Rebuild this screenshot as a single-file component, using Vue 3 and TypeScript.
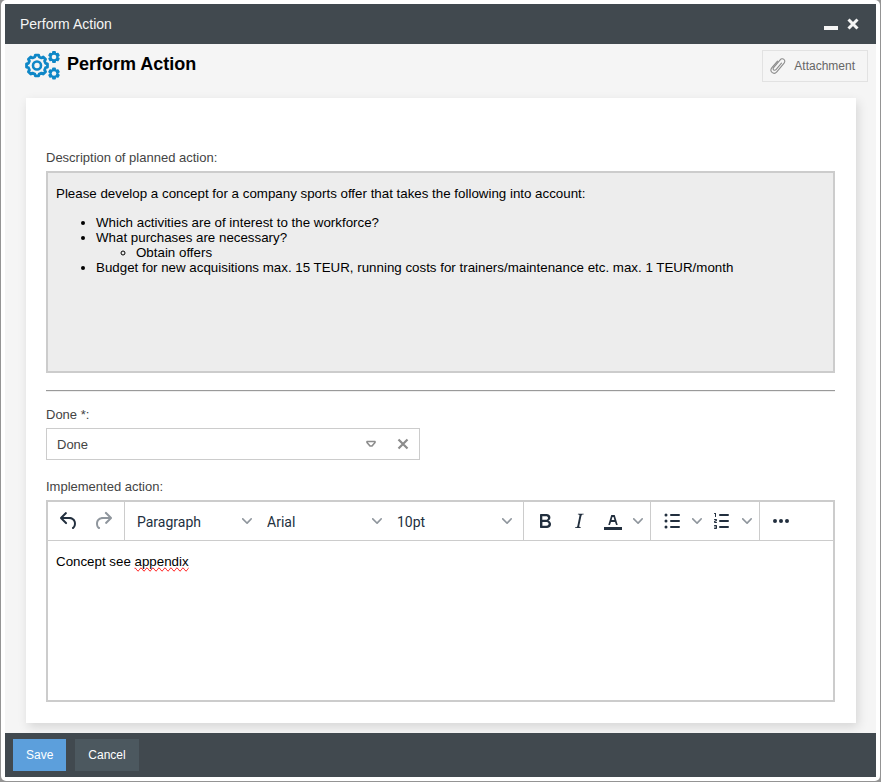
<script setup lang="ts">
import { ref } from 'vue'

interface Tool {
  name: string
  label: string
  split?: boolean
  disabled?: boolean
}

const status = ref('Done')
const blockFormat = ref('Paragraph')
const fontFamily = ref('Arial')
const fontSize = ref('10pt')

const historyTools: Tool[] = [
  { name: 'undo', label: 'Undo' },
  { name: 'redo', label: 'Redo', disabled: true },
]
const toolGroups: Tool[][] = [
  [
    { name: 'bold', label: 'Bold' },
    { name: 'italic', label: 'Italic' },
    { name: 'color', label: 'Text color', split: true },
  ],
  [
    { name: 'bullets', label: 'Bullet list', split: true },
    { name: 'numbers', label: 'Numbered list', split: true },
  ],
  [{ name: 'more', label: 'More' }],
]

const iconPaths: Record<string, string> = {
  undo: 'M6.4 8H12c3.7 0 6.2 2 6.8 5.1.6 2.7-.4 5.6-2.3 6.8a1 1 0 0 1-1-1.8c1.1-.6 1.8-2.7 1.4-4.6-.5-2.1-2.1-3.5-4.9-3.5H6.4l3.3 3.3a1 1 0 1 1-1.4 1.4l-5-5a1 1 0 0 1 0-1.4l5-5a1 1 0 0 1 1.4 1.4L6.4 8z',
  redo: 'M17.6 10H12c-2.8 0-4.4 1.4-4.9 3.5-.4 2 .3 4 1.4 4.6a1 1 0 1 1-1 1.8c-2-1.2-2.9-4.1-2.3-6.8.6-3 3-5.1 6.8-5.1h5.6l-3.3-3.3a1 1 0 1 1 1.4-1.4l5 5a1 1 0 0 1 0 1.4l-5 5a1 1 0 0 1-1.4-1.4l3.3-3.3z',
  bold: 'M7.8 19c-.3 0-.5 0-.6-.2l-.2-.5V5.7c0-.2 0-.4.2-.5l.6-.2h5c1.5 0 2.7.3 3.5 1 .7.6 1.1 1.4 1.1 2.5a3 3 0 0 1-.6 1.9c-.4.6-1 1-1.6 1.2.4.1.9.3 1.3.6s.8.7 1 1.2c.4.4.5 1 .5 1.6 0 1.3-.4 2.3-1.3 3-.8.7-2.1 1-3.8 1H7.8zm5-8.3c.6 0 1.2-.1 1.6-.5.4-.3.6-.7.6-1.3 0-1.1-.8-1.7-2.3-1.7H9.3v3.5h3.4zm.5 6c.7 0 1.3-.1 1.7-.4.4-.4.6-.9.6-1.5s-.2-1-.7-1.4c-.4-.3-1-.4-2-.4H9.4v3.8h4z',
  italic: 'M16.7 4.7l-.1.9h-.3c-.6 0-1 0-1.4.3-.3.3-.4.6-.5 1.1l-2.1 9.8v.6c0 .5.4.8 1.4.8h.2l-.2.8H8l.2-.8h.2c1.1 0 1.8-.5 2-1.5l2-9.8.1-.5c0-.6-.4-.8-1.4-.8h-.3l.2-.9h5.8z',
  color: 'M3 18h18v3H3zM8.7 16h-.8a.5.5 0 0 1-.5-.6l2.7-9c.1-.3.3-.4.5-.4h2.8c.2 0 .4.1.5.4l2.7 9a.5.5 0 0 1-.5.6h-.8a.5.5 0 0 1-.4-.4l-.7-2.2c0-.3-.3-.4-.5-.4h-3.4c-.2 0-.4.1-.5.4l-.7 2.2c0 .3-.2.4-.4.4zm2.6-7.6l-.6 2a.5.5 0 0 0 .5.6h1.6a.5.5 0 0 0 .5-.6l-.6-2c0-.3-.3-.4-.5-.4h-.4c-.2 0-.4.1-.5.4z',
  bullets: 'M11 5h8a1 1 0 0 1 0 2h-8a1 1 0 0 1 0-2zm0 6h8a1 1 0 0 1 0 2h-8a1 1 0 0 1 0-2zm0 6h8a1 1 0 0 1 0 2h-8a1 1 0 0 1 0-2zM6 4.5a1.5 1.5 0 1 1 0 3 1.5 1.5 0 0 1 0-3zm0 6a1.5 1.5 0 1 1 0 3 1.5 1.5 0 0 1 0-3zm0 6a1.5 1.5 0 1 1 0 3 1.5 1.5 0 0 1 0-3z',
  numbers: 'M10 17h8a1 1 0 0 1 0 2h-8a1 1 0 0 1 0-2zm0-6h8a1 1 0 0 1 0 2h-8a1 1 0 0 1 0-2zm0-6h8a1 1 0 0 1 0 2h-8a1 1 0 1 1 0-2zM6 4v3.5a.5.5 0 0 1-1 0V5h-.5a.5.5 0 0 1 0-1H6zm-1 8.8l.2.2h1.3a.5.5 0 0 1 0 1H4.6a1 1 0 0 1-.6-1v-.3c0-.4.2-.8.6-1l1.4-.6V11H4.5a.5.5 0 0 1 0-1h1.9c.3.1.6.5.6.9v.3c0 .4-.2.8-.6 1l-1.4.6zM7 17v2c0 .6-.4 1-1 1H4.5a.5.5 0 0 1 0-1h1.2a.3.3 0 0 0 0-.6H4.4a.4.4 0 1 1 0-.8h1.3a.3.3 0 0 0 0-.6H4.5a.5.5 0 1 1 0-1H6c.6 0 1 .4 1 1z',
  more: 'M6 10a2 2 0 1 0 0 4 2 2 0 0 0 0-4zm12 0a2 2 0 1 0 0 4 2 2 0 0 0 0-4zm-6 0a2 2 0 1 0 0 4 2 2 0 0 0 0-4z',
}
const chevron = 'M8.7 2.2c.3-.3.8-.3 1 0 .4.4.4.9 0 1.2L5.7 7.8c-.3.3-.9.3-1.2 0L.2 3.4a.8.8 0 0 1 0-1.2c.3-.3.8-.3 1.1 0L5 6l3.7-3.8z'

// Outline of a cog: each tooth is a trapezoid between the root and tip radius.
function cog(cx: number, cy: number, tip: number, root: number, teeth: number, turn = 0): string {
  const step = (Math.PI * 2) / teeth
  const points: string[] = []
  for (let i = 0; i < teeth; i++) {
    const a = (i + turn) * step
    for (const [offset, r] of [[-0.32, root], [-0.2, tip], [0.2, tip], [0.32, root]]) {
      const t = a + offset * step
      points.push(`${(cx + r * Math.cos(t)).toFixed(2)} ${(cy + r * Math.sin(t)).toFixed(2)}`)
    }
  }
  return `M${points.join('L')}Z`
}
const bigCog = cog(12, 14.5, 10.6, 8.8, 8)
const topCog = cog(29, 6, 5.2, 3.9, 6, 0.5)
const lowCog = cog(29, 22.5, 5.2, 3.9, 6, 0.5)
</script>

<template>
  <div class="window">
    <header class="titlebar">
      <span class="title">Perform Action</span>
      <button type="button" class="win-btn" aria-label="Minimize">
        <svg width="14" height="14" viewBox="0 0 14 14"><path d="M0 9h14v4H0z" fill="currentColor" /></svg>
      </button>
      <button type="button" class="win-btn" aria-label="Close">
        <svg width="12" height="12" viewBox="0 0 12 12"><path d="M1.5 1.5l9 9M10.5 1.5l-9 9" stroke="currentColor" stroke-width="3" /></svg>
      </button>
    </header>

    <main class="body">
      <div class="head">
        <svg class="cogs" width="36" height="30" viewBox="0 0 36 30" fill="none" stroke="#0f87c7" stroke-linejoin="round">
          <path :d="bigCog" stroke-width="2.8" />
          <circle cx="12" cy="14.5" r="4" stroke-width="2.6" />
          <path :d="topCog" fill="#0f87c7" stroke-width="1.6" />
          <path :d="lowCog" fill="#0f87c7" stroke-width="1.6" />
          <circle cx="29" cy="6" r="2.3" fill="#f5f5f5" stroke="none" />
          <circle cx="29" cy="22.5" r="2.3" fill="#f5f5f5" stroke="none" />
        </svg>
        <h1>Perform Action</h1>
        <button type="button" class="attach">
          <svg width="16" height="18" viewBox="0 0 16 18" fill="none" stroke="#8c8c8c" stroke-width="1.1" stroke-linecap="round">
            <path d="M11.5 6.2L6 12.6c-.8.9-1.9.8-2.4.3-.6-.5-.7-1.5 0-2.3l6.6-7.8c1-1.2 2.7-1.3 3.7-.4 1.1.9 1.2 2.5.2 3.7l-7.3 8.7c-1.4 1.6-3.5 1.7-4.8.6-1.3-1.2-1.4-3.1-.1-4.7l5.6-6.5" />
          </svg>
          Attachment
        </button>
      </div>

      <section class="card">
        <div id="description-label" class="label">Description of planned action:</div>
        <div class="description" role="document" aria-labelledby="description-label">
          <p>Please develop a concept for a company sports offer that takes the following into account:</p>
          <ul>
            <li>Which activities are of interest to the workforce?</li>
            <li>What purchases are necessary?
              <ul>
                <li>Obtain offers</li>
              </ul>
            </li>
            <li>Budget for new acquisitions max. 15 TEUR, running costs for trainers/maintenance etc. max. 1 TEUR/month</li>
          </ul>
        </div>

        <hr />

        <label class="label" for="status">Done *:</label>
        <div class="combo">
          <select id="status" v-model="status">
            <option value=""></option>
            <option>Done</option>
          </select>
          <svg class="combo-arrow" width="10" height="8" viewBox="0 0 10 8" fill="none" stroke="#8c8c8c" stroke-width="1.6" stroke-linejoin="round">
            <path d="M1 1.5h8v1L6 6H4L1 2.500z" />
          </svg>
          <button type="button" class="clear" aria-label="Clear" @click="status = ''">
            <svg width="12" height="12" viewBox="0 0 12 12"><path d="M1.5 1.5l9 9M10.5 1.5l-9 9" stroke="#8c8c8c" stroke-width="2.2" /></svg>
          </button>
        </div>

        <div id="implemented-label" class="label">Implemented action:</div>
        <div class="editor">
          <div class="toolbar" role="toolbar" aria-label="Formatting">
            <div class="group">
              <button v-for="t in historyTools" :key="t.name" type="button" class="tool" :aria-label="t.label" :disabled="t.disabled">
                <svg width="24" height="24" viewBox="0 0 24 24"><path :d="iconPaths[t.name]" /></svg>
              </button>
            </div>
            <div class="group">
              <div class="picker">
                <select v-model="blockFormat" aria-label="Block format"><option>Paragraph</option></select>
                <svg class="chevron" width="10" height="10" viewBox="0 0 10 10"><path :d="chevron" /></svg>
              </div>
              <div class="picker">
                <select v-model="fontFamily" aria-label="Font"><option>Arial</option></select>
                <svg class="chevron" width="10" height="10" viewBox="0 0 10 10"><path :d="chevron" /></svg>
              </div>
              <div class="picker">
                <select v-model="fontSize" aria-label="Font size"><option>10pt</option></select>
                <svg class="chevron" width="10" height="10" viewBox="0 0 10 10"><path :d="chevron" /></svg>
              </div>
            </div>
            <div v-for="(group, i) in toolGroups" :key="i" class="group">
              <template v-for="t in group" :key="t.name">
                <button type="button" class="tool" :aria-label="t.label">
                  <svg width="24" height="24" viewBox="0 0 24 24"><path :d="iconPaths[t.name]" fill-rule="evenodd" /></svg>
                </button>
                <button v-if="t.split" type="button" class="tool split" :aria-label="t.label + ' options'">
                  <svg class="chevron" width="10" height="10" viewBox="0 0 10 10"><path :d="chevron" /></svg>
                </button>
              </template>
            </div>
          </div>
          <div class="content" contenteditable="true" spellcheck="false" role="textbox" aria-multiline="true" aria-labelledby="implemented-label">
            <p>Concept see <span class="misspelled">appendix</span></p>
          </div>
        </div>
      </section>
    </main>

    <footer class="footer">
      <button type="button" class="btn primary">Save</button>
      <button type="button" class="btn">Cancel</button>
    </footer>
  </div>
</template>

<style>
body {
  margin: 0;
  background: #949494;
}
</style>

<style scoped>
.window,
.window * {
  box-sizing: border-box;
}
.window {
  display: flex;
  flex-direction: column;
  min-height: calc(100vh - 1px);
  margin: 0 1px 1px;
  padding: 4px;
  border-radius: 5px;
  background: #fff;
  font-family: "Liberation Sans", Arial, sans-serif;
  font-size: 13px;
  color: #444;
}
button,
select {
  margin: 0;
  padding: 0;
  border: 0;
  background: none;
  font: inherit;
  color: inherit;
}
select {
  appearance: none;
  outline: none;
}
svg {
  display: block;
  flex: none;
}
.titlebar {
  display: flex;
  align-items: center;
  gap: 9px;
  height: 40px;
  padding: 0 17px 0 15px;
  background: #41494f;
  color: #f5f5f5;
  font-size: 14px;
}
.title {
  flex: 1;
}
.body {
  flex: 1;
  display: flex;
  flex-direction: column;
  padding: 6px 8px 10px 20px;
  background: #f5f5f5;
}
.head {
  display: flex;
  align-items: center;
  height: 32px;
  margin-bottom: 16px;
}
h1 {
  flex: 1;
  margin: 0 0 4px 6px;
  font-size: 18px;
  line-height: 24px;
  color: #000;
}
.attach {
  display: flex;
  align-items: center;
  gap: 8px;
  height: 32px;
  padding: 0 12px 0 7px;
  border: 1px solid #e2e2e2;
  font-size: 12px;
  color: #666;
}
.card {
  flex: 1;
  display: flex;
  flex-direction: column;
  margin: 0 12px 0 1px;
  padding: 51px 21px 21px 20px;
  background: #fff;
  box-shadow: 2px 4px 10px rgba(0, 0, 0, 0.13);
}
.label {
  height: 18px;
  line-height: 18px;
  margin-bottom: 4px;
}
.description {
  min-height: 202px;
  padding: 0 8px;
  border: 2px solid #ccc;
  background: #ededed;
  font-size: 10pt;
  line-height: 15px;
  color: #000;
}
.description p {
  margin: 13px 0 14px;
}
.description ul {
  margin: 0;
  padding-left: 40px;
}
hr {
  width: 100%;
  height: 2px;
  margin: 17px 0 14px;
  border: 0;
  border-top: 1px solid #9a9a9a;
  border-bottom: 1px solid #eee;
}
.combo {
  display: flex;
  align-items: center;
  width: 374px;
  max-width: 100%;
  height: 32px;
  margin-bottom: 18px;
  padding: 0 10px;
  border: 1px solid #ccc;
}
.combo select {
  flex: 1;
  height: 30px;
}
.combo-arrow {
  margin-right: 21px;
}
.editor {
  flex: 1;
  display: flex;
  flex-direction: column;
  min-height: 202px;
  border: 2px solid #ccc;
}
.toolbar {
  display: flex;
  flex-wrap: wrap;
  border-bottom: 1px solid #ccc;
  color: #222f3e;
}
.group {
  display: flex;
  align-items: center;
  height: 38px;
  padding: 0 4px;
}
.group + .group {
  border-left: 1px solid #ccc;
}
.tool {
  display: flex;
  align-items: center;
  justify-content: center;
  width: 34px;
  height: 34px;
}
.tool svg,
.chevron {
  fill: #222f3e;
}
.tool:disabled svg {
  opacity: 0.5;
}
.split {
  width: 16px;
}
.chevron {
  opacity: 0.5;
}
.picker {
  display: flex;
  align-items: center;
  width: 130px;
  padding: 0 7px 0 8px;
}
.picker select {
  flex: 1;
  min-width: 0;
  height: 34px;
  padding-top: 2px;
  font-family: Roboto, sans-serif;
  font-size: 14px;
}
.content {
  flex: 1;
  padding: 13px 8px;
  outline: none;
  font-size: 10pt;
  line-height: 15px;
  color: #000;
}
.content p {
  margin: 0;
}
.misspelled {
  text-decoration: spelling-error;
}
.footer {
  display: flex;
  align-items: center;
  gap: 9px;
  height: 44px;
  padding: 0 8px;
  background: #41494f;
}
.btn {
  height: 32px;
  padding: 0 13px;
  background: #4c585f;
  color: #fff;
  font-size: 12px;
}
.primary {
  background: #5c9fdc;
}
</style>
